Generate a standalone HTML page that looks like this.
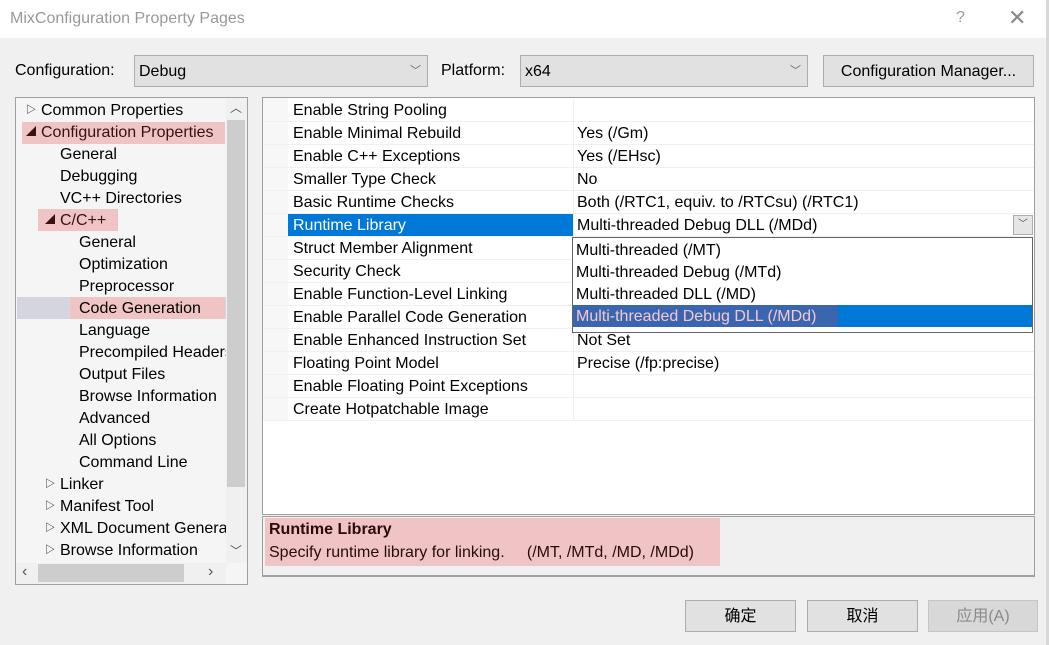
<!DOCTYPE html>
<html><head><meta charset="utf-8"><style>
*{box-sizing:border-box;margin:0;padding:0}
body{width:1049px;height:645px;overflow:hidden;background:#f0f0f0;font-family:"Liberation Sans","Noto Sans CJK SC",sans-serif;font-size:16px;color:#000;position:relative}
.a{position:absolute;white-space:nowrap}
.combo{position:absolute;background:#e1e1e1;border:1px solid #adadad;height:32px;line-height:31px;padding-left:4px}
.btn{position:absolute;background:#e1e1e1;border:1px solid #adadad;text-align:center;line-height:31px;height:32px}
.tr{position:absolute;height:22px;line-height:24px;white-space:nowrap}
.row{position:absolute;left:0;width:771px;height:23px;border-bottom:1px solid #f0f0f0}
.row .n{position:absolute;left:25px;width:286px;height:22px;line-height:24px;padding-left:5px;border-right:1px solid #f0f0f0}
.row .v{position:absolute;left:311px;height:22px;line-height:24px;padding-left:3px}
.tri{font-size:10px;margin-right:5px;display:inline-block;vertical-align:2px}
</style></head><body>
<div class="a" style="left:0;top:0;width:1049px;height:38px;background:#fff"></div>
<div class="a" style="left:10px;top:10px;color:#999;font-size:16px">MixConfiguration Property Pages</div>
<div class="a" style="left:956px;top:9px;color:#999;font-size:16px">?</div>
<div class="a" style="left:1008px;top:5px;color:#888;font-size:22px;font-weight:300">✕</div>
<div class="a" style="left:1046px;top:0;width:3px;height:645px;background:#d8d8d8"></div>

<div class="a" style="left:15px;top:62px">Configuration:</div>
<div class="combo" style="left:134px;top:55px;width:294px">Debug<span class="a" style="right:6px;top:0;color:#666;font-size:11px">﹀</span></div>
<div class="a" style="left:441px;top:62px">Platform:</div>
<div class="combo" style="left:520px;top:55px;width:288px">x64<span class="a" style="right:6px;top:0;color:#666;font-size:11px">﹀</span></div>
<div class="btn" style="left:823px;top:55px;width:211px">Configuration Manager...</div>

<!-- tree -->
<div class="a" style="left:15px;top:97px;width:233px;height:488px;background:#f5f5f5;border:1px solid #a0a0a0"></div>
<div class="a" style="left:226px;top:98px;width:21px;height:465px;background:#f0f0f0"></div>
<div class="a" style="left:227px;top:120px;width:18px;height:367px;background:#cdcdcd"></div>
<div class="a" style="left:230px;top:99px;color:#555;font-size:12px">︿</div>
<div class="a" style="left:230px;top:542px;color:#555;font-size:12px">﹀</div>
<div class="a" style="left:16px;top:563px;width:210px;height:21px;background:#f0f0f0"></div>
<div class="a" style="left:38px;top:564px;width:146px;height:18px;background:#cdcdcd"></div>
<div class="a" style="left:22px;top:563px;color:#555">‹</div>
<div class="a" style="left:208px;top:563px;color:#555">›</div>
<div class="a" style="left:22px;top:122px;width:203px;height:22px;background:#f0c4c4"></div>
<div class="a" style="left:38px;top:209px;width:80px;height:22px;background:#f0c4c4"></div>
<div class="a" style="left:17px;top:297px;width:209px;height:22px;background:#d5d5df"></div>
<div class="a" style="left:70px;top:297px;width:155px;height:22px;background:#f0c4c4"></div>
<div style="position:absolute;left:16px;top:99px;width:210px;height:462px;overflow:hidden">
<div class="tr" style="left:10px;top:0"><span class="tri">▷</span>Common Properties</div>
<div class="tr" style="left:10px;top:22px;color:#3a1010"><span class="tri">◢</span>Configuration Properties</div>
<div class="tr" style="left:44px;top:44px">General</div>
<div class="tr" style="left:44px;top:66px">Debugging</div>
<div class="tr" style="left:44px;top:88px">VC++ Directories</div>
<div class="tr" style="left:29px;top:110px;color:#3a1010"><span class="tri">◢</span>C/C++</div>
<div class="tr" style="left:63px;top:132px">General</div>
<div class="tr" style="left:63px;top:154px">Optimization</div>
<div class="tr" style="left:63px;top:176px">Preprocessor</div>
<div class="tr" style="left:63px;top:198px">Code Generation</div>
<div class="tr" style="left:63px;top:220px">Language</div>
<div class="tr" style="left:63px;top:242px">Precompiled Headers</div>
<div class="tr" style="left:63px;top:264px">Output Files</div>
<div class="tr" style="left:63px;top:286px">Browse Information</div>
<div class="tr" style="left:63px;top:308px">Advanced</div>
<div class="tr" style="left:63px;top:330px">All Options</div>
<div class="tr" style="left:63px;top:352px">Command Line</div>
<div class="tr" style="left:29px;top:374px"><span class="tri">▷</span>Linker</div>
<div class="tr" style="left:29px;top:396px"><span class="tri">▷</span>Manifest Tool</div>
<div class="tr" style="left:29px;top:418px"><span class="tri">▷</span>XML Document Generator</div>
<div class="tr" style="left:29px;top:440px"><span class="tri">▷</span>Browse Information</div>
</div>

<!-- grid -->
<div class="a" style="left:262px;top:97px;width:773px;height:418px;background:#fff;border:1px solid #a0a0a0"></div>
<div class="a" style="left:263px;top:98px;width:25px;height:322px;background:#f7f7f7"></div>
<div style="position:absolute;left:263px;top:99px;width:771px;height:414px">
<div class="row" style="top:0"><div class="n">Enable String Pooling</div><div class="v"></div></div>
<div class="row" style="top:23px"><div class="n">Enable Minimal Rebuild</div><div class="v">Yes (/Gm)</div></div>
<div class="row" style="top:46px"><div class="n">Enable C++ Exceptions</div><div class="v">Yes (/EHsc)</div></div>
<div class="row" style="top:69px"><div class="n">Smaller Type Check</div><div class="v">No</div></div>
<div class="row" style="top:92px"><div class="n">Basic Runtime Checks</div><div class="v">Both (/RTC1, equiv. to /RTCsu) (/RTC1)</div></div>
<div class="row" style="top:115px"><div class="n" style="background:#0078d7;color:#fff">Runtime Library</div><div class="v">Multi-threaded Debug DLL (/MDd)</div></div>
<div class="row" style="top:138px"><div class="n">Struct Member Alignment</div></div>
<div class="row" style="top:161px"><div class="n">Security Check</div></div>
<div class="row" style="top:184px"><div class="n">Enable Function-Level Linking</div></div>
<div class="row" style="top:207px"><div class="n">Enable Parallel Code Generation</div></div>
<div class="row" style="top:230px"><div class="n">Enable Enhanced Instruction Set</div><div class="v">Not Set</div></div>
<div class="row" style="top:253px"><div class="n">Floating Point Model</div><div class="v">Precise (/fp:precise)</div></div>
<div class="row" style="top:276px"><div class="n">Enable Floating Point Exceptions</div></div>
<div class="row" style="top:299px"><div class="n">Create Hotpatchable Image</div></div>
</div>
<div class="a" style="left:1013px;top:215px;width:20px;height:20px;background:#e5e5e5;border:1px solid #adadad;color:#555;font-size:10px;text-align:center;line-height:18px">﹀</div>
<!-- dropdown -->
<div class="a" style="left:572px;top:237px;width:461px;height:96px;background:#fff;border:1px solid #646464">
<div class="a" style="left:3px;top:1px;line-height:24px">Multi-threaded (/MT)</div>
<div class="a" style="left:3px;top:23px;line-height:24px">Multi-threaded Debug (/MTd)</div>
<div class="a" style="left:3px;top:45px;line-height:24px">Multi-threaded DLL (/MD)</div>
<div class="a" style="left:0;top:67px;width:459px;height:22px;background:#0078d7"></div>
<div class="a" style="left:0;top:67px;width:265px;height:22px;background:#3a66b0"></div>
<div class="a" style="left:3px;top:67px;line-height:24px;color:#f5c8d0">Multi-threaded Debug DLL (/MDd)</div>
</div>

<!-- description -->
<div class="a" style="left:262px;top:516px;width:773px;height:61px;border:1px solid #a0a0a0;border-bottom:2px solid #a0a0a0"></div>
<div class="a" style="left:265px;top:518px;width:455px;height:48px;background:#f0c4c4"></div>
<div class="a" style="left:269px;top:521px;font-weight:bold;color:#2a0a0a">Runtime Library</div>
<div class="a" style="left:269px;top:544px;color:#2a0a0a">Specify runtime library for linking.&nbsp;&nbsp;&nbsp;&nbsp; (/MT, /MTd, /MD, /MDd)</div>

<div class="btn" style="left:685px;top:600px;width:111px">确定</div>
<div class="btn" style="left:807px;top:600px;width:111px">取消</div>
<div class="btn" style="left:928px;top:600px;width:110px;color:#8a8a8a;background:#d8d8d8;border-color:#c5c5c5">应用(A)</div>
</body></html>
